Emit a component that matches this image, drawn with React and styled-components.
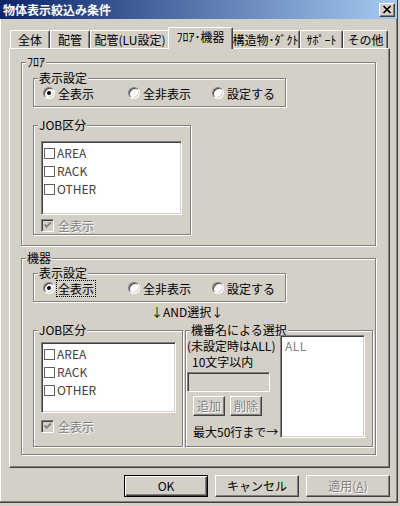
import React from 'react';
import styled, { createGlobalStyle, css } from 'styled-components';

const FACE = '#d4d0c8';
const FONT = `"Noto Sans CJK JP", "Noto Sans", sans-serif`;

const Global = createGlobalStyle`
  html, body { margin: 0; padding: 0; background: ${FACE}; }
  body { font-family: ${FONT}; font-size: 12px; color: #000; }
  * { box-sizing: border-box; }
`;

const Screen = styled.div`
  width: 400px;
  height: 506px;
  background: ${FACE};
  overflow: hidden;
`;

const Frame = styled.div`
  width: 398px;
  height: 503px;
  border-right: 1px solid #404040;
  border-bottom: 1px solid #404040;
  box-shadow: inset -1px -1px 0 #808080, inset 1px 0 0 #fff;
  display: flex;
  flex-direction: column;
`;

const TitleBar = styled.div`
  width: 397px;
  height: 19px;
  flex-shrink: 0;
  background: linear-gradient(to right, #0a246a, #a6caf0);
  display: flex;
  align-items: center;
  justify-content: space-between;
  padding: 0 2px 0 3px;
`;

const TitleText = styled.span`
  color: #fff;
  font-weight: bold;
  font-size: 12px;
  line-height: 19px;
  white-space: nowrap;
`;

const CloseButton = styled.div`
  width: 16px;
  height: 14px;
  background: ${FACE};
  border: 1px solid;
  border-color: #fff #404040 #404040 #fff;
  box-shadow: inset -1px -1px 0 #808080;
  display: flex;
  align-items: center;
  justify-content: center;
`;

const TabStrip = styled.div`
  margin-top: 8px;
  height: 21px;
  flex-shrink: 0;
  padding-left: 10px;
  display: flex;
  align-items: flex-end;
`;

const Tab = styled.div`
  width: ${(p) => p.$w}px;
  height: 18px;
  flex-shrink: 0;
  border-top: 1px solid #fff;
  border-left: 1px solid #fff;
  border-right: 1px solid #404040;
  box-shadow: inset -1px 0 0 #808080;
  border-radius: 2px 2px 0 0;
  background: ${FACE};
  display: flex;
  align-items: center;
  justify-content: center;
  font-size: 12px;
  line-height: 16px;
  white-space: nowrap;
  ${(p) =>
    p.$active &&
    css`
      width: ${p.$w + 4}px;
      height: 22px;
      margin: 0 -2px -1px;
      padding-bottom: 3px;
      position: relative;
      z-index: 1;
    `}
`;

const Panel = styled.div`
  margin-left: 9px;
  width: 381px;
  height: 420px;
  flex-shrink: 0;
  border-top: 1px solid #fff;
  border-left: 1px solid #fff;
  border-right: 1px solid #404040;
  border-bottom: 1px solid #404040;
  box-shadow: inset -1px -1px 0 #808080;
  padding: 13px 0 0 11px;
  display: flex;
  flex-direction: column;
`;

const Group = styled.div`
  width: ${(p) => p.$w}px;
  height: ${(p) => p.$h}px;
  flex-shrink: 0;
  margin: ${(p) => p.$m || '0'};
  border: 1px solid #808080;
  box-shadow: 1px 1px 0 #fff, inset 1px 1px 0 #fff;
  display: flex;
  flex-direction: column;
`;

const Legend = styled.div`
  align-self: flex-start;
  margin: -8px 0 0 ${(p) => (p.$x != null ? p.$x : 4)}px;
  padding: 0 1px;
  height: 13px;
  line-height: 13px;
  background: ${FACE};
  white-space: nowrap;
`;

const RadioRow = styled.div`
  display: flex;
  align-items: center;
  height: 16px;
  margin-top: 1px;
  padding-left: 9px;
`;

const RadioItem = styled.div`
  width: ${(p) => p.$w || 85}px;
  display: flex;
  align-items: center;
  flex-shrink: 0;
`;

const RadioCircle = styled.span`
  width: 12px;
  height: 12px;
  flex-shrink: 0;
  border-radius: 50%;
  border: 1px solid;
  border-color: #808080 #fff #fff #808080;
  box-shadow: inset 1px 1px 0 #404040, inset -1px -1px 0 ${FACE};
  background: #fff;
  display: flex;
  align-items: center;
  justify-content: center;
  &::after {
    content: '';
    width: 4px;
    height: 4px;
    border-radius: 50%;
    background: #000;
    display: ${(p) => (p.$on ? 'block' : 'none')};
  }
`;

const RadioLabel = styled.span`
  margin-left: 3px;
  line-height: 15px;
  white-space: nowrap;
  ${(p) =>
    p.$focus &&
    css`
      margin-left: 2px;
      padding: 0 1px;
      outline: 1px dotted #000;
      outline-offset: 0;
    `}
`;

const ListBox = styled.div`
  width: ${(p) => p.$w}px;
  height: ${(p) => p.$h}px;
  flex-shrink: 0;
  margin: ${(p) => p.$m || '0'};
  background: #fff;
  border: 1px solid;
  border-color: #808080 #fff #fff #808080;
  box-shadow: inset 1px 1px 0 #404040, inset -1px -1px 0 ${FACE};
  padding: 2px 0 0 2px;
  display: flex;
  flex-direction: column;
`;

const ListItem = styled.div`
  height: 18px;
  display: flex;
  align-items: center;
  color: #404040;
  line-height: 18px;
`;

const FlatCheck = styled.span`
  width: 11px;
  height: 11px;
  flex-shrink: 0;
  border: 1px solid #606060;
  background: #fff;
  margin-right: 2px;
`;

const CheckRow = styled.div`
  display: flex;
  align-items: center;
  height: 13px;
  margin: ${(p) => p.$m || '0'};
`;

const SunkenCheck = styled.span`
  width: 13px;
  height: 13px;
  flex-shrink: 0;
  border: 1px solid;
  border-color: #808080 #fff #fff #808080;
  box-shadow: inset 1px 1px 0 #404040, inset -1px -1px 0 ${FACE};
  background: ${FACE};
  display: flex;
  align-items: center;
  justify-content: center;
`;

const DisabledText = styled.span`
  color: #808080;
  text-shadow: 1px 1px 0 #fff;
  margin-left: ${(p) => p.$ml || 0}px;
  line-height: 15px;
  white-space: nowrap;
`;

const AndLine = styled.div`
  margin-top: 3px;
  height: 13px;
  line-height: 13px;
  padding-left: 129px;
  white-space: nowrap;
`;

const BottomRow = styled.div`
  display: flex;
  gap: 2px;
  margin: 12px 0 0 11px;
`;

const NameRow = styled.div`
  display: flex;
  margin-top: -1px;
`;

const NameColumn = styled.div`
  width: 94px;
  flex-shrink: 0;
  padding: 3px 0 0 1px;
  display: flex;
  flex-direction: column;
`;

const InfoLine = styled.div`
  height: 16px;
  line-height: 16px;
  white-space: nowrap;
  padding-left: ${(p) => p.$indent || 0}px;
`;

const TextInput = styled.div`
  width: 83px;
  height: 20px;
  margin-top: 2px;
  background: ${FACE};
  border: 1px solid;
  border-color: #808080 #fff #fff #808080;
  box-shadow: inset 1px 1px 0 #404040, inset -1px -1px 0 ${FACE};
`;

const SmallButtons = styled.div`
  display: flex;
  gap: 5px;
  margin: 4px 0 0 6px;
`;

const Button = styled.button`
  width: ${(p) => p.$w}px;
  height: ${(p) => p.$h}px;
  padding: 0;
  margin: 0;
  font-family: ${FONT};
  font-size: 12px;
  line-height: 14px;
  background: ${FACE};
  border: 1px solid;
  border-color: #fff #404040 #404040 #fff;
  box-shadow: inset -1px -1px 0 #808080, inset 1px 1px 0 ${FACE};
  color: #000;
  white-space: nowrap;
  ${(p) =>
    p.disabled &&
    css`
      color: #808080;
      text-shadow: 1px 1px 0 #fff;
    `}
  ${(p) =>
    p.$default &&
    css`
      border: 1px solid #000;
      box-shadow: inset 1px 1px 0 #fff, inset -1px -1px 0 #404040, inset -2px -2px 0 #808080;
    `}
`;

const AllItem = styled.div`
  color: #808080;
  line-height: 14px;
  padding: 1px 0 0 2px;
  letter-spacing: 0.5px;
`;

const ButtonRow = styled.div`
  display: flex;
  gap: 7px;
  margin-top: 7px;
  padding-left: 124px;
`;

const CheckMark = ({ color }) => (
  <svg width="9" height="9" viewBox="0 0 9 9">
    <polyline points="1.5,3.5 3.5,5.8 7.8,1.5" fill="none" stroke={color} strokeWidth="1.8" />
  </svg>
);

const CloseGlyph = () => (
  <svg width="10" height="9" viewBox="0 0 10 9">
    <path d="M1.5 1 L8.5 8 M8.5 1 L1.5 8" stroke="#000" strokeWidth="1.7" />
  </svg>
);

const DisplayGroup = ({ margin, focus }) => (
  <Group $w={253} $h={29} $m={margin}>
    <Legend>表示設定</Legend>
    <RadioRow>
      <RadioItem>
        <RadioCircle $on />
        <RadioLabel $focus={focus}>全表示</RadioLabel>
      </RadioItem>
      <RadioItem $w={84}>
        <RadioCircle />
        <RadioLabel>全非表示</RadioLabel>
      </RadioItem>
      <RadioItem>
        <RadioCircle />
        <RadioLabel>設定する</RadioLabel>
      </RadioItem>
    </RadioRow>
  </Group>
);

const JobItems = () => (
  <>
    {['AREA', 'RACK', 'OTHER'].map((t) => (
      <ListItem key={t}>
        <FlatCheck />
        {t}
      </ListItem>
    ))}
  </>
);

const AllCheck = ({ margin }) => (
  <CheckRow $m={margin}>
    <SunkenCheck>
      <CheckMark color="#808080" />
    </SunkenCheck>
    <DisabledText $ml={4}>全表示</DisabledText>
  </CheckRow>
);

const tabs = [
  { label: '全体', w: 40 },
  { label: '配管', w: 40 },
  { label: '配管(LU設定)', w: 80 },
  { label: 'ﾌﾛｱ･機器', w: 61, active: true },
  { label: '構造物･ﾀﾞｸﾄ', w: 69 },
  { label: 'ｻﾎﾟｰﾄ', w: 43 },
  { label: 'その他', w: 45 },
];

export default function App() {
  return (
    <Screen>
      <Global />
      <Frame>
        <TitleBar>
          <TitleText>物体表示絞込み条件</TitleText>
          <CloseButton>
            <CloseGlyph />
          </CloseButton>
        </TitleBar>

        <TabStrip>
          {tabs.map((t) => (
            <Tab key={t.label} $w={t.w} $active={t.active}>
              {t.label}
            </Tab>
          ))}
        </TabStrip>

        <Panel>
          <Group $w={355} $h={184}>
            <Legend $x={4}>ﾌﾛｱ</Legend>
            <DisplayGroup margin="10px 0 0 11px" />
            <Group $w={158} $h={110} $m="18px 0 0 11px">
              <Legend>JOB区分</Legend>
              <ListBox $w={141} $h={74} $m="10px 0 0 7px">
                <JobItems />
              </ListBox>
              <AllCheck margin="4px 0 0 7px" />
            </Group>
          </Group>

          <Group $w={355} $h={197} $m="12px 0 0 0">
            <Legend $x={4}>機器</Legend>
            <DisplayGroup margin="9px 0 0 11px" focus />
            <AndLine>↓AND選択↓</AndLine>
            <BottomRow>
              <Group $w={150} $h={117}>
                <Legend>JOB区分</Legend>
                <ListBox $w={135} $h={71} $m="6px 0 0 7px">
                  <JobItems />
                </ListBox>
                <AllCheck margin="7px 0 0 7px" />
              </Group>
              <Group $w={188} $h={117}>
                <Legend>機番名による選択</Legend>
                <NameRow>
                  <NameColumn>
                    <InfoLine>(未設定時はALL)</InfoLine>
                    <InfoLine $indent={5}>10文字以内</InfoLine>
                    <TextInput />
                    <SmallButtons>
                      <Button $w={32} $h={20} disabled>追加</Button>
                      <Button $w={32} $h={20} disabled>削除</Button>
                    </SmallButtons>
                    <InfoLine $indent={6} style={{ marginTop: 8 }}>最大50行まで→</InfoLine>
                  </NameColumn>
                  <ListBox $w={85} $h={103}>
                    <AllItem>ALL</AllItem>
                  </ListBox>
                </NameRow>
              </Group>
            </BottomRow>
          </Group>
        </Panel>

        <ButtonRow>
          <Button $w={84} $h={22} $default>OK</Button>
          <Button $w={84} $h={22}>キャンセル</Button>
          <Button $w={84} $h={22} disabled>
            適用(<u>A</u>)
          </Button>
        </ButtonRow>
      </Frame>
    </Screen>
  );
}
